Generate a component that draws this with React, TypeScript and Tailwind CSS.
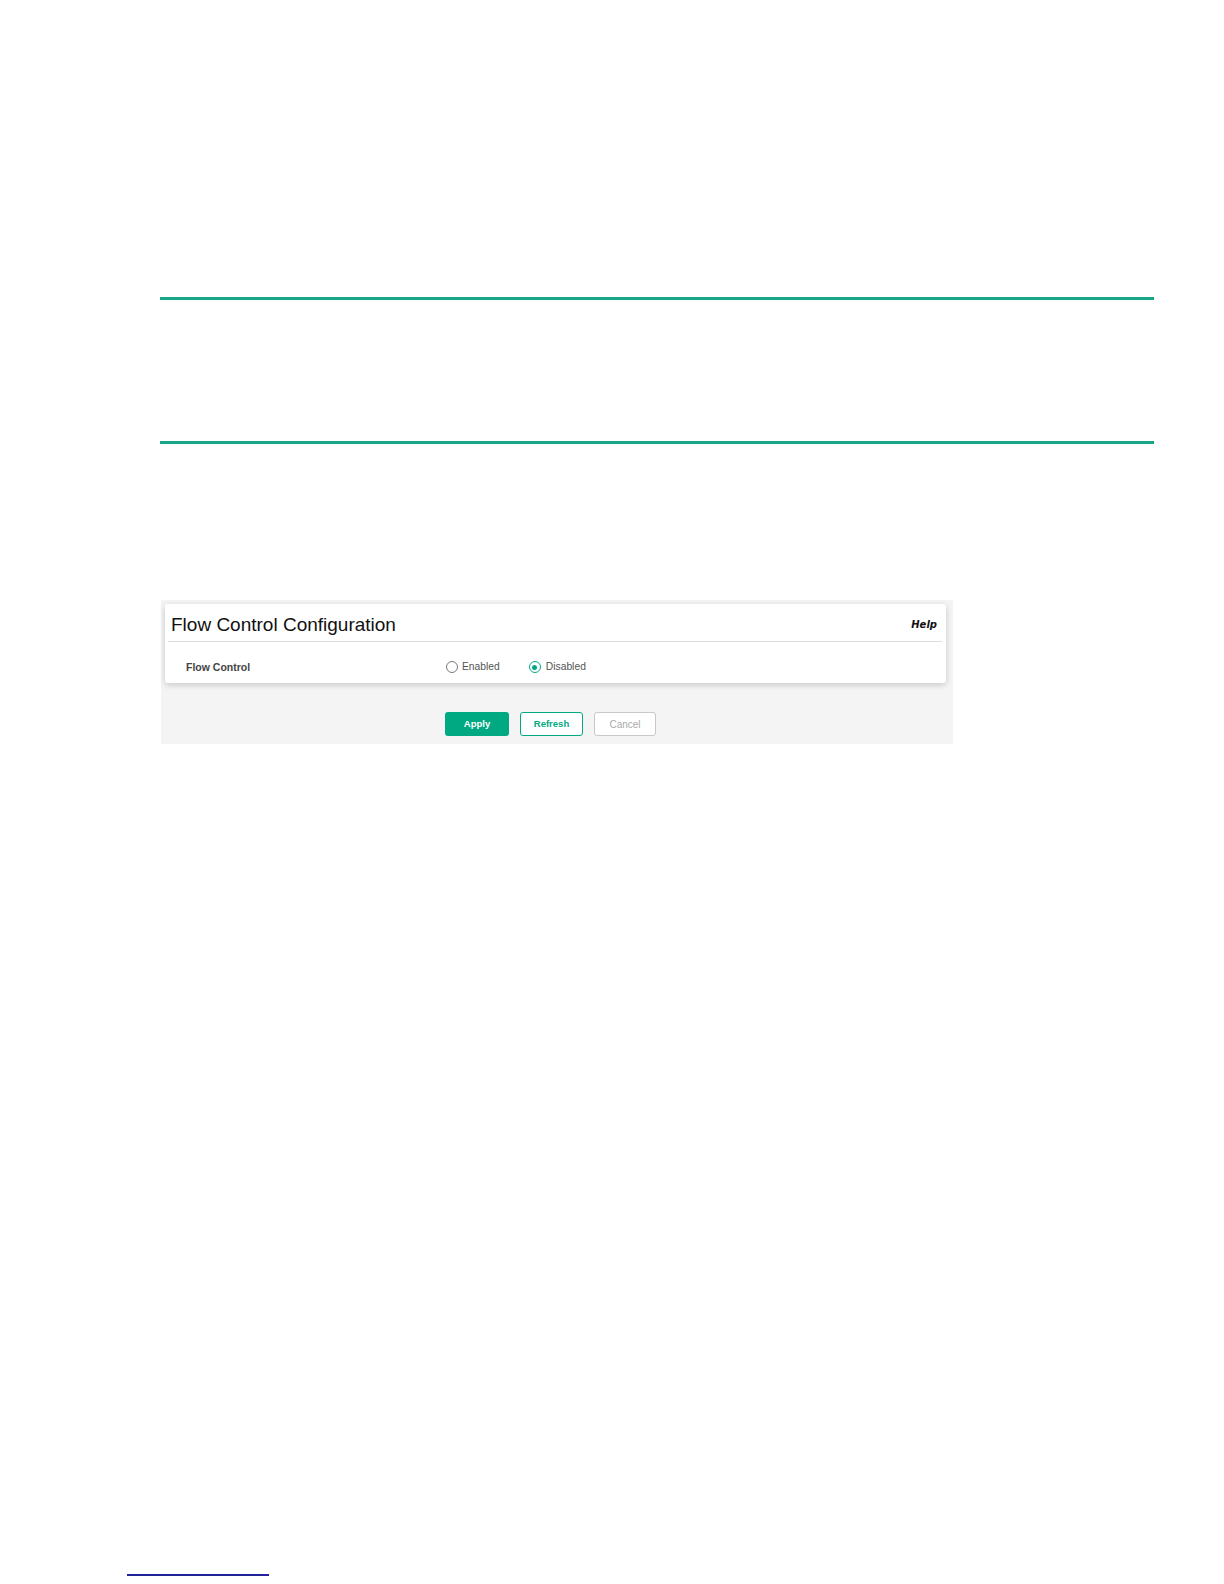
import React from "react";

export default function App() {
  return (
    <div className="w-[1224px] h-[1584px] bg-white overflow-hidden" style={{ fontFamily: '"Liberation Sans", Arial, sans-serif' }}>
      <div className="pt-[297px]">
        <div className="ml-[160px] w-[994px] h-[3px] bg-[#16a884]" />
        <div className="h-[141px]" />
        <div className="ml-[160px] w-[994px] h-[3px] bg-[#16a884]" />
      </div>
      <div className="mt-[156px] ml-[161px] w-[792px] h-[144px] bg-[#f4f4f4] pt-[4px] pl-[4px] pr-[7px]">
        <div className="bg-white rounded-[3px] shadow-[0_2px_6px_rgba(0,0,0,0.18)] h-[79px]">
          <div className="flex items-start justify-between pl-[6px] pr-[9px] pt-[10px]">
            <div className="text-[19px] leading-[22px] text-[#111]">Flow Control Configuration</div>
            <div
              className="mt-[5px] text-[10px] leading-[12px] font-bold italic text-[#111]"
              style={{ fontFamily: '"DejaVu Sans", Verdana, sans-serif' }}
            >
              Help
            </div>
          </div>
          <div className="mt-[5px] ml-[3px] mr-[4px] h-px bg-[#dcdcdc]" />
          <div className="flex items-center pt-[18px] leading-[14px]">
            <div className="w-[281px] pl-[21px] text-[10.5px] font-bold text-[#444]">Flow Control</div>
            <div className="flex items-center text-[10.3px] text-[#555]">
              <span className="w-[12px] h-[12px] rounded-full border-[1.5px] border-[#777] bg-white" />
              <span className="ml-[4px]">Enabled</span>
              <span className="ml-[29px] w-[12px] h-[12px] rounded-full border-[1.5px] border-[#01a982] bg-white flex items-center justify-center">
                <span className="w-[5px] h-[5px] rounded-full bg-[#01a982]" />
              </span>
              <span className="ml-[5px]">Disabled</span>
            </div>
          </div>
        </div>
        <div className="mt-[29px] pl-[280px] flex gap-[11px]">
          <div className="w-[64px] h-[24px] rounded-[3px] bg-[#01a982] text-white text-[9.5px] font-bold flex items-center justify-center">
            Apply
          </div>
          <div className="w-[63px] h-[24px] rounded-[3px] border-[1.5px] border-[#01a982] bg-white text-[#01a982] text-[9.5px] font-bold flex items-center justify-center">
            Refresh
          </div>
          <div className="w-[62px] h-[24px] rounded-[3px] border border-[#c8c8c8] bg-white text-[#aaa] text-[10px] flex items-center justify-center">
            Cancel
          </div>
        </div>
      </div>
      <div className="mt-[830px] ml-[127px] w-[142px] h-[2px] bg-[#22229a]" />
    </div>
  );
}
